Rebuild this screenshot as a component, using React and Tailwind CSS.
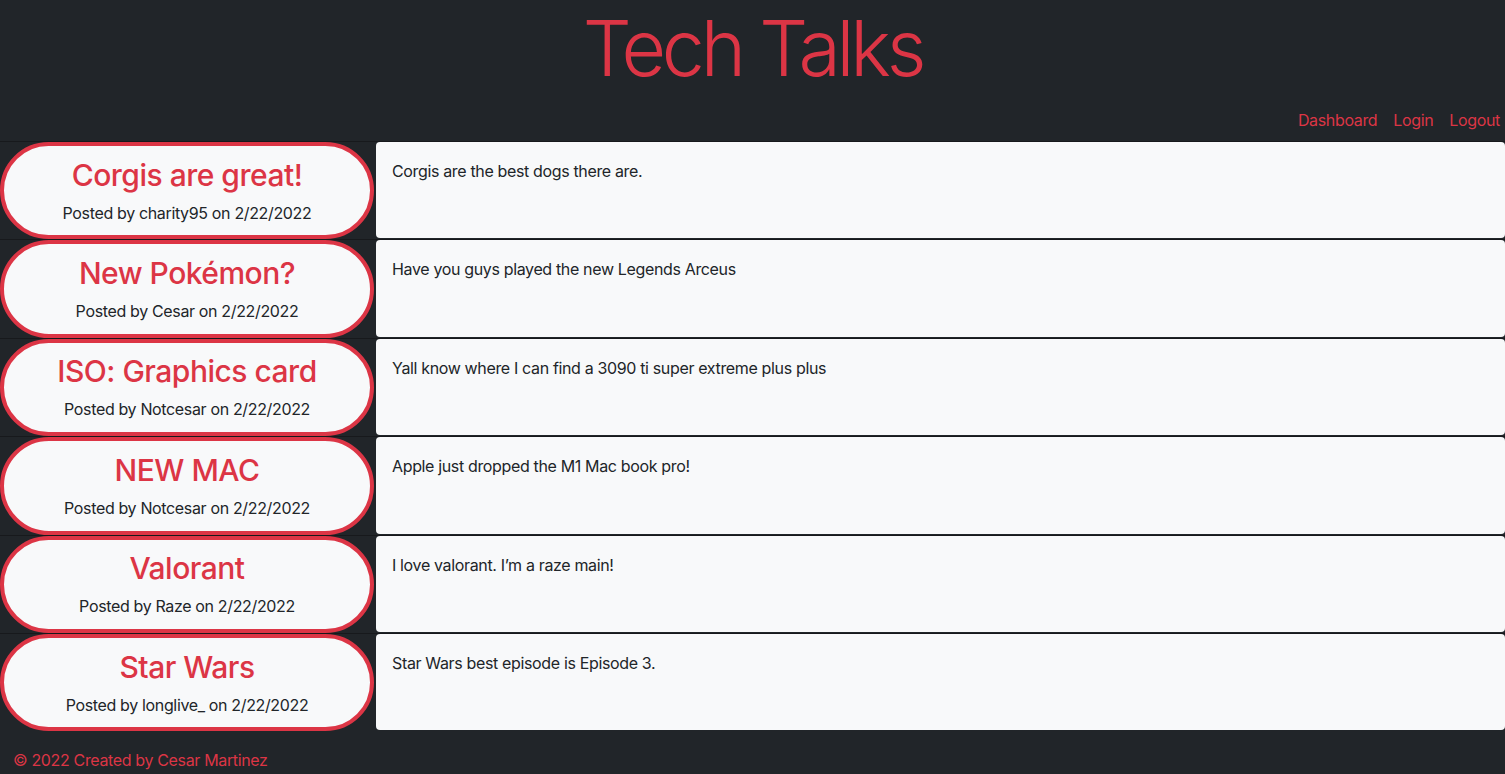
const posts = [
  { title: 'Corgis are great!', author: 'charity95', date: '2/22/2022', body: 'Corgis are the best dogs there are.' },
  { title: 'New Pokémon?', author: 'Cesar', date: '2/22/2022', body: 'Have you guys played the new Legends Arceus' },
  { title: 'ISO: Graphics card', author: 'Notcesar', date: '2/22/2022', body: 'Yall know where I can find a 3090 ti super extreme plus plus' },
  { title: 'NEW MAC', author: 'Notcesar', date: '2/22/2022', body: 'Apple just dropped the M1 Mac book pro!' },
  { title: 'Valorant', author: 'Raze', date: '2/22/2022', body: 'I love valorant. I’m a raze main!' },
  { title: 'Star Wars', author: 'longlive_', date: '2/22/2022', body: 'Star Wars best episode is Episode 3.' },
]

function PostRow({ post }) {
  return (
    <div className="flex h-[98.4px] border-t border-[#17191c]">
      <div className="flex w-[374px] shrink-0 flex-col items-center justify-center gap-2 rounded-full border-4 border-[#dc3545] bg-[#f8f9fa]">
        <h2 className="text-[30px] leading-[1.2] font-medium tracking-[-0.5px] text-[#dc3545]">{post.title}</h2>
        <p className="text-base leading-6 text-[#212529]">
          Posted by {post.author} on {post.date}
        </p>
      </div>
      <div className="ml-[2px] mb-[1px] flex-1 rounded bg-[#f8f9fa] px-4 pt-[17px] text-base leading-6 text-[#212529]">
        {post.body}
      </div>
    </div>
  )
}

export default function App() {
  return (
    <div className="min-h-[774px] bg-[#212529] font-['Inter','Liberation_Sans',sans-serif] tracking-[-0.35px]">
      <header className="flex flex-col">
        <h1 className="pt-[1px] text-center text-[77px] leading-[95px] font-light tracking-[-4.2px] text-[#dc3545]">
          Tech Talks
        </h1>
        <nav className="mt-3 flex justify-end gap-4 pr-[5px] text-base leading-6 text-[#dc3545]">
          <a href="#">Dashboard</a>
          <a href="#">Login</a>
          <a href="#">Logout</a>
        </nav>
      </header>

      <main className="mt-[9px]">
        {posts.map((post) => (
          <PostRow key={post.title} post={post} />
        ))}
      </main>

      <footer className="mt-[17px] px-[13px] text-base leading-6 text-[#dc3545]">
        © 2022 Created by Cesar Martinez
      </footer>
    </div>
  )
}
